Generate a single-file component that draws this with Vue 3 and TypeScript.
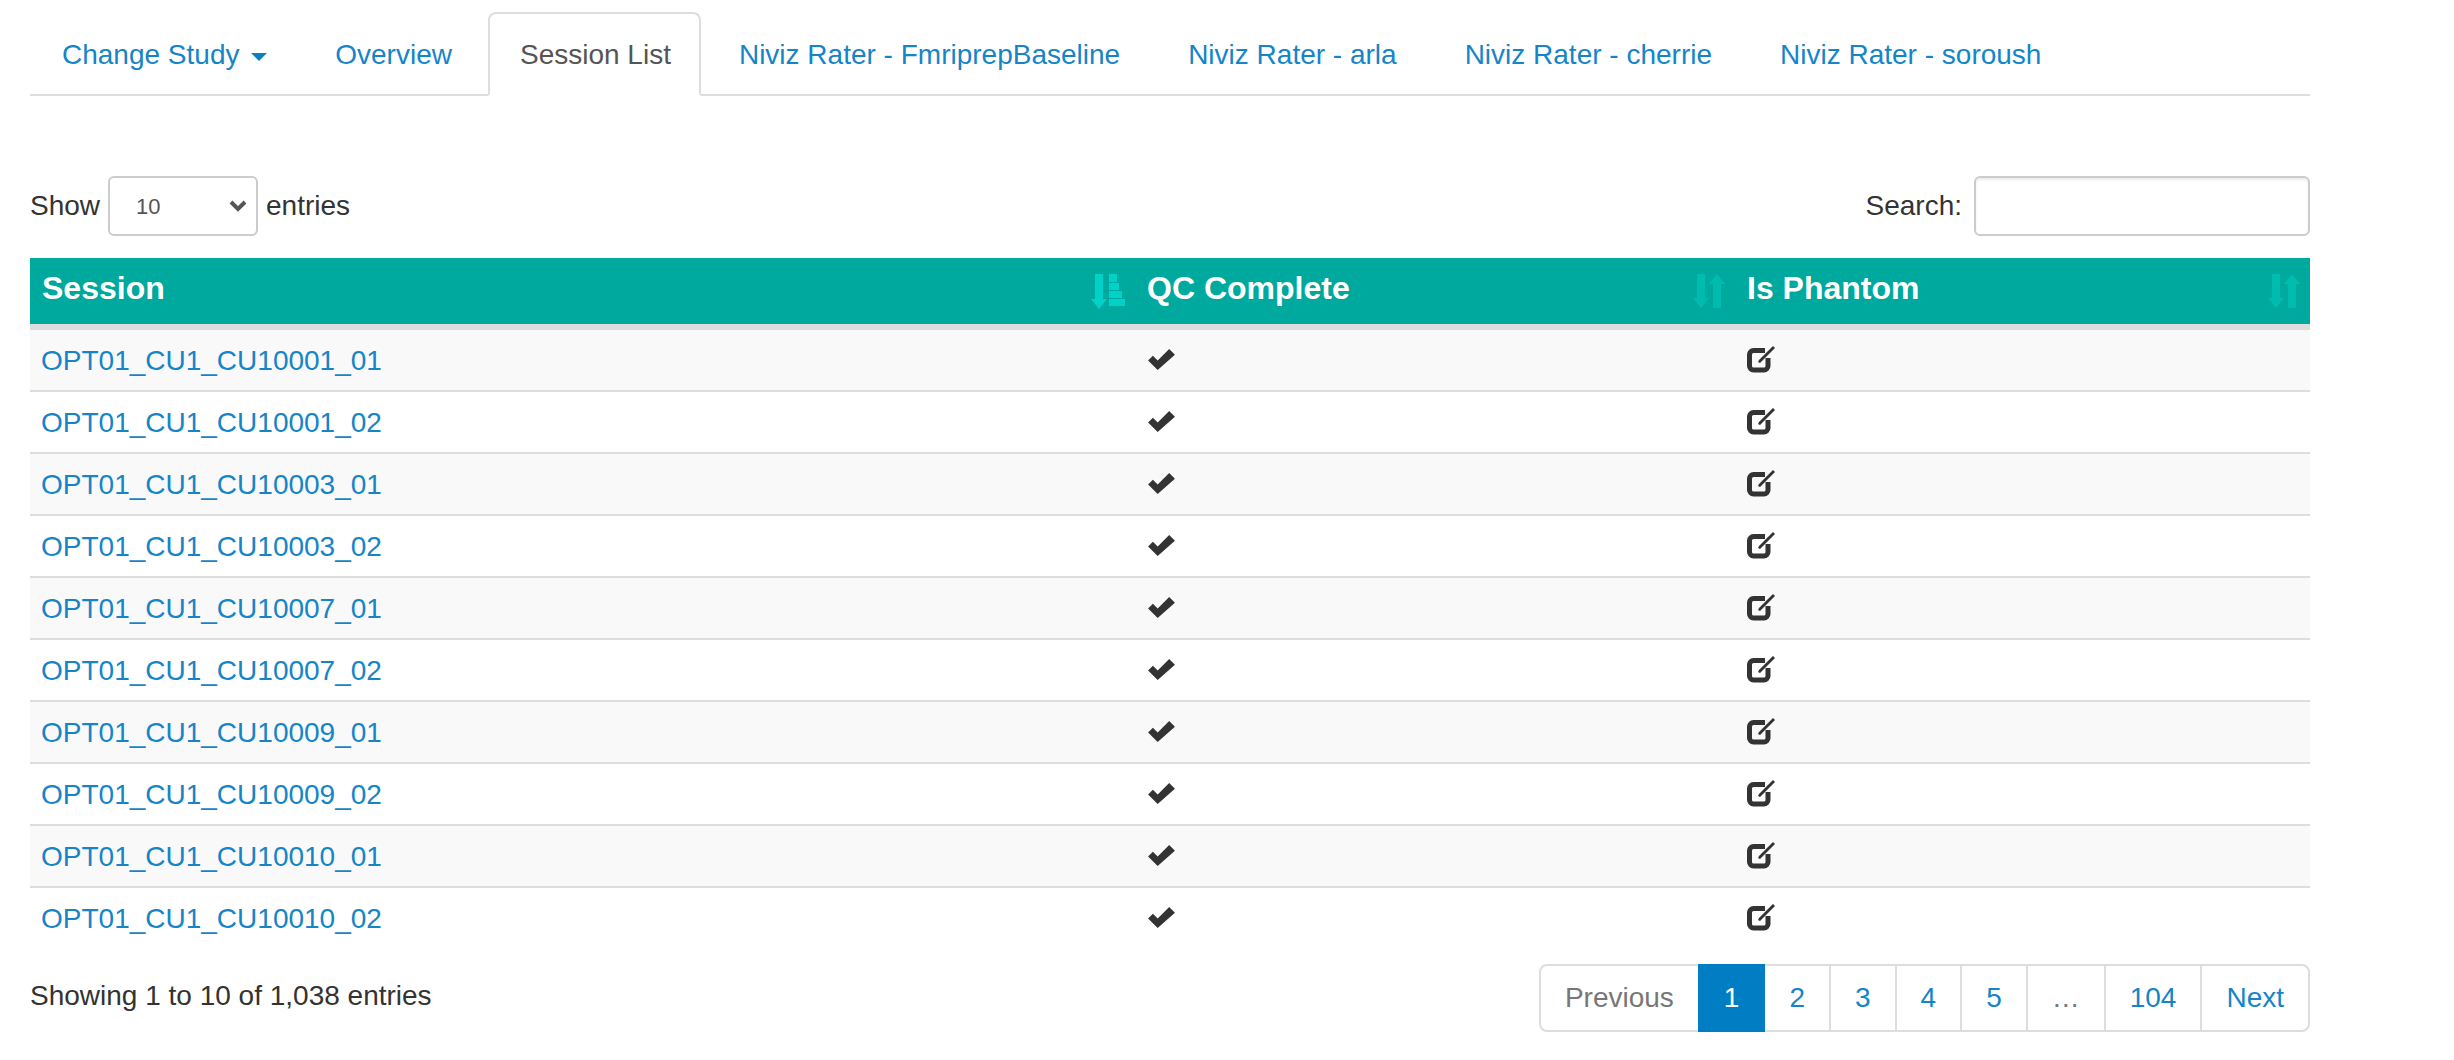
<script setup lang="ts">
const tabs: string[] = ['Niviz Rater - FmriprepBaseline', 'Niviz Rater - arla', 'Niviz Rater - cherrie', 'Niviz Rater - soroush']
const sessions: string[] = [
  'OPT01_CU1_CU10001_01', 'OPT01_CU1_CU10001_02', 'OPT01_CU1_CU10003_01', 'OPT01_CU1_CU10003_02',
  'OPT01_CU1_CU10007_01', 'OPT01_CU1_CU10007_02', 'OPT01_CU1_CU10009_01', 'OPT01_CU1_CU10009_02',
  'OPT01_CU1_CU10010_01', 'OPT01_CU1_CU10010_02',
]
const pages: string[] = ['2', '3', '4', '5']
</script>

<template>
  <div class="page">
    <ul class="tabs">
      <li class="tab"><a>Change Study <span class="caret"></span></a></li>
      <li class="tab"><a>Overview</a></li>
      <li class="tab active"><a>Session List</a></li>
      <li v-for="t in tabs" :key="t" class="tab"><a>{{ t }}</a></li>
    </ul>

    <div class="controls">
      <label class="ctl">Show
        <span class="select-wrap">
          <select class="entries"><option>10</option></select>
          <svg class="chev" viewBox="0 0 18 12" width="18" height="12">
            <path d="M2 2l7 7 7-7" fill="none" stroke="#555" stroke-width="4" />
          </svg>
        </span>
        entries
      </label>
      <label class="ctl">Search:
        <input class="search" type="search" />
      </label>
    </div>

    <table class="grid">
      <colgroup>
        <col class="c1" /><col class="c2" /><col class="c3" />
      </colgroup>
      <thead>
        <tr>
          <th>
            <div class="th">
              <span class="label">Session</span>
              <svg class="sort on" viewBox="0 0 34 35" width="34" height="35">
                <path d="M4 0h8v25h4l-8 10-8-10h4zM18 0h8v8h-8zM18 9h10v7H18zM18 17h13v7H18zM18 25h16v7H18z" />
              </svg>
            </div>
          </th>
          <th>
            <div class="th">
              <span class="label">QC Complete</span>
              <svg class="sort" viewBox="0 0 32 34" width="32" height="34">
                <path d="M4 0h8v24h4l-8 10-8-10h4zM20 34V10h-4l8-10 8 10h-4v24z" />
              </svg>
            </div>
          </th>
          <th>
            <div class="th">
              <span class="label">Is Phantom</span>
              <svg class="sort" viewBox="0 0 32 34" width="32" height="34">
                <path d="M4 0h8v24h4l-8 10-8-10h4zM20 34V10h-4l8-10 8 10h-4v24z" />
              </svg>
            </div>
          </th>
        </tr>
      </thead>
      <tbody>
        <tr v-for="s in sessions" :key="s">
          <td><a>{{ s }}</a></td>
          <td>
            <svg class="ico" viewBox="0 0 30 24" width="29" height="23">
              <path d="M1 13l5-5 5 5L23 1l6 6L11 23z" fill="#333" />
            </svg>
          </td>
          <td>
            <svg class="ico" viewBox="0 0 30 28" width="30" height="28">
              <path d="M18 5.500H6.500a4 4 0 0 0-4 4v11.500a4 4 0 0 0 4 4H17a4 4 0 0 0 4-4v-8" fill="none" stroke="#333" stroke-width="5" />
              <path d="M11 17l1-2L26 1l2 2L13 18z" fill="#333" />
            </svg>
          </td>
        </tr>
      </tbody>
    </table>

    <div class="foot">
      <div class="info">Showing 1 to 10 of 1,038 entries</div>
      <ul class="pager">
        <li class="off first">Previous</li>
        <li class="current">1</li>
        <li v-for="p in pages" :key="p"><a>{{ p }}</a></li>
        <li class="off">…</li>
        <li><a>104</a></li>
        <li class="last"><a>Next</a></li>
      </ul>
    </div>
  </div>
</template>

<style>
body {
  background: #fff;
}
</style>

<style scoped>
.page {
  width: 2280px;
  margin-left: 30px;
  padding-top: 12px;
  font-family: "Liberation Sans", Arial, sans-serif;
  font-size: 28px;
  line-height: 40px;
  color: #333;
}
.tabs {
  display: flex;
  list-style: none;
  margin: 0;
  padding: 0;
  border-bottom: 2px solid #ddd;
}
.tab {
  margin-right: 4px;
  margin-bottom: -2px;
}
.tab a {
  display: block;
  padding: 21px 30px 19px;
  border: 2px solid transparent;
  border-radius: 8px 8px 0 0;
  color: #1585c8;
}
.tab.active {
  margin-right: 6px;
}
.tab.active a {
  padding-right: 28px;
  color: #555;
  background: #fff;
  border-color: #ddd #ddd #fff;
}
.caret {
  display: inline-block;
  width: 0;
  height: 0;
  margin-left: 4px;
  vertical-align: middle;
  border-top: 8px solid #0a7fc2;
  border-left: 8px solid transparent;
  border-right: 8px solid transparent;
}
.controls {
  display: flex;
  justify-content: space-between;
  margin-top: 80px;
  height: 60px;
}
.ctl {
  display: flex;
  align-items: center;
  gap: 8px;
}
.select-wrap {
  position: relative;
  display: block;
  height: 60px;
}
.entries {
  display: block;
  width: 150px;
  height: 60px;
  box-sizing: border-box;
  padding: 0 26px;
  appearance: none;
  font: 22px "Liberation Sans", Arial, sans-serif;
  color: #555;
  background: #fff;
  border: 2px solid #ccc;
  border-radius: 6px;
}
.chev {
  position: absolute;
  right: 11px;
  top: 24px;
  pointer-events: none;
}
.search {
  width: 336px;
  height: 60px;
  box-sizing: border-box;
  margin-left: 4px;
  background: #fff;
  border: 2px solid #ccc;
  border-radius: 6px;
  box-shadow: inset 0 2px 2px rgba(0, 0, 0, .075);
}
.grid {
  width: 100%;
  margin-top: 22px;
  table-layout: fixed;
  border-collapse: separate;
  border-spacing: 0;
}
.c2 {
  width: 600px;
}
.c3 {
  width: 575px;
}
th {
  height: 66px;
  padding: 0 10px 0 12px;
  background: #00a99d;
  color: #fff;
  font-size: 32px;
  font-weight: 700;
  text-align: left;
  border-bottom: 6px solid #ddd;
}
.th {
  display: flex;
  align-items: center;
  justify-content: space-between;
}
.label {
  margin-bottom: 6px;
}
.sort {
  display: block;
  fill: #00bcae;
}
.sort.on {
  fill: #00d2c8;
}
td {
  height: 58px;
  padding: 2px 10px 0 11px;
  border-bottom: 2px solid #ddd;
}
tbody tr:nth-child(odd) td {
  background: #f9f9f9;
}
tbody tr:last-child td {
  background: #fff;
  border-bottom: 0;
}
td a {
  color: #1585c8;
}
.ico {
  display: block;
  margin: 0 0 4px 1px;
}
.foot {
  display: flex;
  justify-content: space-between;
  align-items: flex-start;
  margin-top: 16px;
}
.info {
  padding-top: 12px;
}
.pager {
  display: flex;
  list-style: none;
  margin: 0;
  padding: 0;
}
.pager li {
  padding: 12px 24px;
  margin-left: -2px;
  border: 2px solid #ddd;
  color: #1585c8;
  background: #fff;
}
.pager li.off {
  color: #777;
}
.pager li.current {
  color: #fff;
  background: #007dc3;
  border-color: #007dc3;
  z-index: 1;
}
.pager li.first {
  margin-left: 0;
  border-radius: 8px 0 0 8px;
}
.pager li.last {
  border-radius: 0 8px 8px 0;
}
</style>
